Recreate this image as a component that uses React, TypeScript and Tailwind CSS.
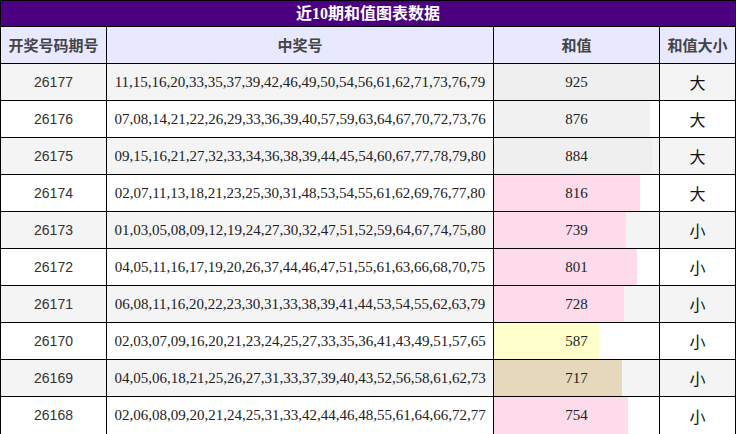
import React from "react";

type Row = { p: string; n: string; v: number; c: string; s: string };

const rows: Row[] = [
  { p: "26177", n: "11,15,16,20,33,35,37,39,42,46,49,50,54,56,61,62,71,73,76,79", v: 925, c: "#efefef", s: "大" },
  { p: "26176", n: "07,08,14,21,22,26,29,33,36,39,40,57,59,63,64,67,70,72,73,76", v: 876, c: "#f1f1f1", s: "大" },
  { p: "26175", n: "09,15,16,21,27,32,33,34,36,38,39,44,45,54,60,67,77,78,79,80", v: 884, c: "#efefef", s: "大" },
  { p: "26174", n: "02,07,11,13,18,21,23,25,30,31,48,53,54,55,61,62,69,76,77,80", v: 816, c: "#fddbeb", s: "大" },
  { p: "26173", n: "01,03,05,08,09,12,19,24,27,30,32,47,51,52,59,64,67,74,75,80", v: 739, c: "#fddbeb", s: "小" },
  { p: "26172", n: "04,05,11,16,17,19,20,26,37,44,46,47,51,55,61,63,66,68,70,75", v: 801, c: "#fddbeb", s: "小" },
  { p: "26171", n: "06,08,11,16,20,22,23,30,31,33,38,39,41,44,53,54,55,62,63,79", v: 728, c: "#fddbeb", s: "小" },
  { p: "26170", n: "02,03,07,09,16,20,21,23,24,25,27,33,35,36,41,43,49,51,57,65", v: 587, c: "#ffffcc", s: "小" },
  { p: "26169", n: "04,05,06,18,21,25,26,27,31,33,37,39,40,43,52,56,58,61,62,73", v: 717, c: "#e5d8bd", s: "小" },
  { p: "26168", n: "02,06,08,09,20,21,24,25,31,33,42,44,46,48,55,61,64,66,72,77", v: 754, c: "#fddbeb", s: "小" },
];

const cjkSans = { fontFamily: '"Noto Sans CJK SC", "Noto Sans", sans-serif' };
const serif = { fontFamily: '"Liberation Serif", "Noto Sans CJK SC", serif' };
const sans = { fontFamily: '"Liberation Sans", "Noto Sans CJK SC", sans-serif' };

export default function App() {
  return (
    <div className="w-[736px] h-[434px] bg-white">
      <div className="w-[736px] border border-black">
        <div
          className="h-[26px] bg-[#4b0082] border-b border-black flex items-center justify-center text-white font-bold text-[16px]"
          style={{ fontFamily: '"Liberation Serif", "Noto Sans CJK SC", serif' }}
        >
          近10期和值图表数据
        </div>
        <div className="flex h-[37px] bg-[#e8e9ff] border-b border-black text-[#444] font-bold text-[15px]" style={cjkSans}>
          <div className="w-[106px] border-r border-black flex items-center justify-center">开奖号码期号</div>
          <div className="w-[387px] border-r border-black flex items-center justify-center">中奖号</div>
          <div className="w-[166px] border-r border-black flex items-center justify-center">和值</div>
          <div className="w-[75px] flex items-center justify-center">和值大小</div>
        </div>
        {rows.map((r, i) => (
          <div
            key={r.p}
            className={`flex h-[37px] ${i < rows.length - 1 ? "border-b" : "h-[36px]"} border-black ${i % 2 === 0 ? "bg-[#f4f4f4]" : "bg-white"}`}
          >
            <div className="w-[106px] border-r border-black flex items-center justify-center text-[14px] text-[#333]" style={sans}>
              {r.p}
            </div>
            <div className="w-[387px] border-r border-black flex items-center justify-center text-[15px] text-[#222]" style={serif}>
              {r.n}
            </div>
            <div className="w-[166px] border-r border-black relative flex items-center justify-center text-[15px] text-[#222]" style={serif}>
              <div className="absolute left-0 top-0 bottom-0" style={{ width: `${(r.v / 925) * 100}%`, background: r.c }} />
              <span className="relative">{r.v}</span>
            </div>
            <div className="w-[75px] flex items-center justify-center text-[16px] text-[#111]" style={cjkSans}>
              {r.s}
            </div>
          </div>
        ))}
      </div>
    </div>
  );
}
